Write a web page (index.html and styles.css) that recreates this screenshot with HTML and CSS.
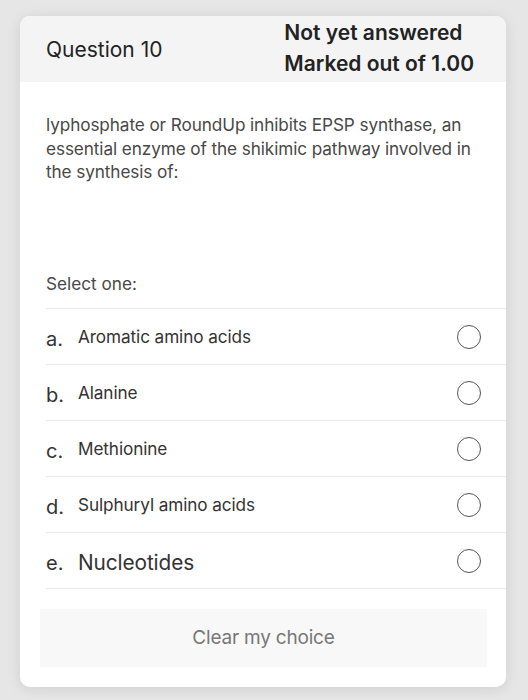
FILE: index.html
```html
<!DOCTYPE html>
<html>
<head>
<meta charset="utf-8">
<link rel="stylesheet" href="styles.css">
</head>
<body>
<div class="card">
  <div class="header">
    <div class="qno">Question 10</div>
    <div class="status">
      <div>Not yet answered</div>
      <div>Marked out of 1.00</div>
    </div>
  </div>
  <div class="body">
    <p class="qtext">lyphosphate or RoundUp inhibits EPSP synthase, an essential enzyme of the shikimic pathway involved in the synthesis of:</p>
    <p class="prompt">Select one:</p>
    <div class="options">
      <div class="opt"><span class="letter">a.</span><span class="label">Aromatic amino acids</span><span class="radio"></span></div>
      <div class="opt"><span class="letter">b.</span><span class="label">Alanine</span><span class="radio"></span></div>
      <div class="opt"><span class="letter">c.</span><span class="label">Methionine</span><span class="radio"></span></div>
      <div class="opt"><span class="letter">d.</span><span class="label">Sulphuryl amino acids</span><span class="radio"></span></div>
      <div class="opt"><span class="letter">e.</span><span class="label big">Nucleotides</span><span class="radio"></span></div>
    </div>
    <div class="clear">Clear my choice</div>
  </div>
</div>
</body>
</html>
```

FILE: styles.css
```css
html, body {
  margin: 0;
  padding: 0;
}
body {
  background: #e6e6e6;
  font-family: Inter, "Noto Sans", sans-serif;
  width: 528px;
  height: 700px;
  overflow: hidden;
  padding-top: 16px;
  box-sizing: border-box;
}
.card {
  margin-left: 20px;
  width: 486px;
  height: 671px;
  background: #fff;
  border-radius: 10px;
  overflow: hidden;
  box-shadow: 0 2px 14px rgba(0,0,0,0.10);
  display: flex;
  flex-direction: column;
}
.header {
  background: #f4f4f4;
  height: 66px;
  display: flex;
  align-items: center;
  justify-content: space-between;
  padding: 0 32px 0 26px;
}
.qno {
  font-size: 21px;
  color: #222;
  margin-top: 0px;
}
.status {
  font-size: 21px;
  font-weight: 600;
  color: #222;
  line-height: 31px;
  margin-top: -2px;
}
.body {
  padding: 0 0 0 26px;
  display: flex;
  flex-direction: column;
}
.qtext {
  margin: 31px 18px 0 0;
  font-size: 17.2px;
  line-height: 23.5px;
  color: #484848;
  letter-spacing: -0.1px;
}
.prompt {
  margin: 88px 0 13px 0;
  font-size: 17.2px;
  line-height: 23px;
  color: #484848;
}
.options {
  border-top: 1px solid #e8e8e8;
}
.opt {
  height: 55px;
  border-bottom: 1px solid #e8e8e8;
  display: flex;
  align-items: center;
  padding-right: 25px;
}
.letter {
  width: 32px;
  font-size: 20px;
  color: #333;
  margin-top: 6px;
}
.label {
  flex: 1;
  font-size: 17.2px;
  color: #333;
  letter-spacing: -0.1px;
}
.label.big {
  font-size: 20.8px;
  margin-top: 4px;
}
.radio {
  width: 22px;
  height: 22px;
  border: 1.6px solid #555;
  border-radius: 50%;
  margin-top: 2px;
}
.clear {
  margin: 20px 19px 0 -6px;
  height: 58px;
  background: #f8f8f8;
  display: flex;
  align-items: center;
  justify-content: center;
  font-size: 19px;
  color: #777;
  letter-spacing: -0.2px;
}
```
